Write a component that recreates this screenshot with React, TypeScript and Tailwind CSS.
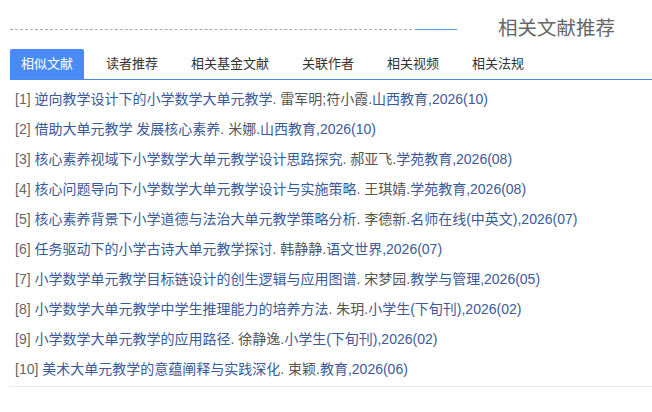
import { useState } from 'react';

const tabs = ['相似文献', '读者推荐', '相关基金文献', '关联作者', '相关视频', '相关法规'];

const refs = [
  { title: '逆向教学设计下的小学数学大单元教学', author: '雷军明;符小霞', source: '山西教育,2026(10)' },
  { title: '借助大单元教学 发展核心素养', author: '米娜', source: '山西教育,2026(10)' },
  { title: '核心素养视域下小学数学大单元教学设计思路探究', author: '郝亚飞', source: '学苑教育,2026(08)' },
  { title: '核心问题导向下小学数学大单元教学设计与实施策略', author: '王琪婧', source: '学苑教育,2026(08)' },
  { title: '核心素养背景下小学道德与法治大单元教学策略分析', author: '李德新', source: '名师在线(中英文),2026(07)' },
  { title: '任务驱动下的小学古诗大单元教学探讨', author: '韩静静', source: '语文世界,2026(07)' },
  { title: '小学数学单元教学目标链设计的创生逻辑与应用图谱', author: '宋梦园', source: '教学与管理,2026(05)' },
  { title: '小学数学大单元教学中学生推理能力的培养方法', author: '朱玥', source: '小学生(下旬刊),2026(02)' },
  { title: '小学数学大单元教学的应用路径', author: '徐静逸', source: '小学生(下旬刊),2026(02)' },
  { title: '美术大单元教学的意蕴阐释与实践深化', author: '束颖', source: '教育,2026(06)' },
];

export default function App() {
  const [active, setActive] = useState(0);

  return (
    <div
      className="w-[652px] h-[412px] bg-white pl-[10px] overflow-hidden"
      style={{ fontFamily: '"Liberation Sans", "Noto Sans CJK SC", sans-serif' }}
    >
      {/* header */}
      <div className="flex items-center h-[30px] mt-[14px]">
        <div className="flex-1 border-t border-dashed border-[#aaaaaa]" />
        <div className="w-[40px] h-px bg-[#4a9be8]" />
        <div className="pl-[41px] pr-[37px] text-[19.5px] leading-none text-[#666666]">
          相关文献推荐
        </div>
      </div>

      {/* tabs */}
      <div className="flex mt-[5px] h-[31px] border-b border-[#4a88e8] gap-[11px]">
        {tabs.map((t, i) => (
          <button
            key={t}
            onClick={() => setActive(i)}
            className={
              i === active
                ? 'h-[30px] px-[11px] rounded-t-[2px] bg-[#4a8af4] text-white text-[13px]'
                : 'h-[30px] px-[11px] text-[#333333] text-[13px]'
            }
          >
            {t}
          </button>
        ))}
      </div>

      {/* list */}
      <div className="pt-[4px] pb-[2px] pl-[5px] border-b border-[#e8e8e8]">
        {refs.map((r, i) => (
          <div key={i} className="h-[30px] leading-[30px] text-[14px] whitespace-nowrap">
            <span className="text-[#666666]">[{i + 1}] </span>
            <span className="text-[#3c5a9a]">{r.title}</span>
            <span className="text-[#555555]">. {r.author}.</span>
            <span className="text-[#3c5a9a]">{r.source}</span>
          </div>
        ))}
      </div>
    </div>
  );
}
